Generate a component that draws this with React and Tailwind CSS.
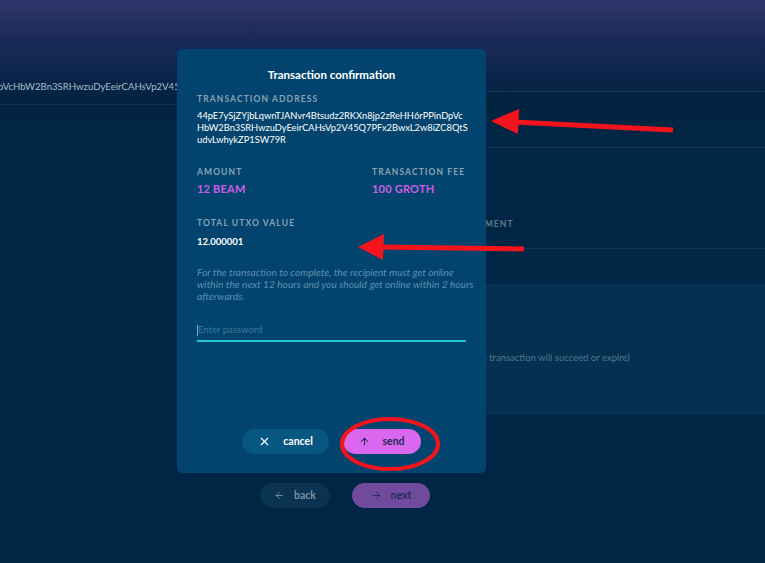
import { X, ArrowUp, ArrowLeft, ArrowRight } from 'lucide-react';

const font = { fontFamily: 'Lato, "Open Sans", sans-serif' };

const addressLines = [
  '44pE7ySjZYjbLqwnTJANvr4Btsudz2RKXn8jp2zReHH6rPPinDpVc',
  'HbW2Bn3SRHwzuDyEeirCAHsVp2V45Q7PFx2BwxL2w8iZC8QtS',
  'udvLwhykZP1SW79R',
];

const noteLines = [
  'For the transaction to complete, the recipient must get online',
  'within the next 12 hours and you should get online within 2 hours',
  'afterwards.',
];

const Label = ({ children, className = '', color = 'text-[#8aa3b6]' }) => (
  <div className={`text-[8.5px] leading-[12px] font-bold tracking-[0.13em] ${color} ${className}`}>
    {children}
  </div>
);

const Background = () => (
  <div className="flex flex-col">
    <div className="grid grid-cols-[340px_1fr]">
      <div className="pt-[80px] overflow-hidden">
        <div className="h-[25px] border-b border-[#0b3658] whitespace-nowrap text-[9.6px] leading-[14px] text-[#a7bccb] -ml-[2px]">
          pVcHbW2Bn3SRHwzuDyEeirCAHsVp2V45Q7PFx2BwxL2w8iZC8QtS
        </div>
      </div>
      <div className="flex flex-col">
        <div className="h-[92px] border-b border-[#0b3658]" />
        <div className="h-[56px] border-b border-[#0b3658]" />
        <div className="h-[101px] border-b border-[#0b3658] pl-[121px] pt-[70px]">
          <Label color="text-[#62798e]">COMMENT</Label>
        </div>
        <div className="h-[35px]" />
        <div className="h-[131px] bg-[#05304f] pl-[133px] pt-[67px]">
          <div className="text-[9.5px] leading-[14px] text-[#56768f]">the transaction will succeed or expire)</div>
        </div>
      </div>
    </div>
    <div className="mt-[68px] ml-[260px] flex gap-[22px]">
      <div className="w-[70px] h-[25px] rounded-full bg-[#0a3352] flex items-center justify-center gap-[9px] text-[#7c8ea3] text-[10.5px] font-bold">
        <ArrowLeft size={11} strokeWidth={2} />
        back
      </div>
      <div className="w-[78px] h-[25px] rounded-full bg-[#704a9d] flex items-center justify-center gap-[9px] text-[#1f2e56] text-[10.5px] font-bold">
        <ArrowRight size={11} strokeWidth={2} />
        next
      </div>
    </div>
  </div>
);

const Modal = () => (
  <div className="absolute left-[177px] top-[49px] w-[309px] h-[424px] rounded-[5px] bg-[#02446d] flex flex-col px-[20px] pt-[19px] pb-[19px]">
    <div className="text-center text-white text-[11.5px] leading-[14px] font-bold">Transaction confirmation</div>
    <Label className="mt-[11px]">TRANSACTION ADDRESS</Label>
    <div className="mt-[5px] text-[9.3px] leading-[12px] text-white whitespace-nowrap">
      {addressLines.map((l) => (
        <div key={l}>{l}</div>
      ))}
    </div>
    <div className="mt-[20px] grid grid-cols-[175px_1fr]">
      <div>
        <Label>AMOUNT</Label>
        <div className="mt-[4px] text-[11px] leading-[14px] font-bold text-[#c95fe3] tracking-[0.02em]">12 BEAM</div>
      </div>
      <div>
        <Label>TRANSACTION FEE</Label>
        <div className="mt-[4px] text-[11px] leading-[14px] font-bold text-[#c95fe3] tracking-[0.02em]">100 GROTH</div>
      </div>
    </div>
    <Label className="mt-[21px]">TOTAL UTXO VALUE</Label>
    <div className="mt-[7px] text-[9.5px] leading-[12px] font-bold text-white">12.000001</div>
    <div className="mt-[18px] text-[10.2px] leading-[12px] italic text-[#5f8fb0] whitespace-nowrap">
      {noteLines.map((l) => (
        <div key={l}>{l}</div>
      ))}
    </div>
    <div className="mt-[19px] h-[21px] border-b-2 border-[#25c6c6] flex items-center">
      <span className="w-px h-[11px] bg-[#7fb3cc]" />
      <span className="text-[9.5px] text-[#3f7898]">Enter password</span>
    </div>
    <div className="mt-auto flex justify-center gap-[14px]">
      <div className="w-[87px] h-[25px] rounded-full bg-[#065782] flex items-center justify-center gap-[12px] text-white text-[10.5px] font-bold">
        <X size={13} strokeWidth={2} />
        cancel
      </div>
      <div className="w-[78px] h-[25px] rounded-full bg-[#d968ee] flex items-center justify-center gap-[12px] text-[#1b2a55] text-[10.5px] font-bold">
        <ArrowUp size={11} strokeWidth={2.2} />
        send
      </div>
    </div>
  </div>
);

const Annotations = () => (
  <svg className="absolute inset-0 pointer-events-none" width="765" height="563" viewBox="0 0 765 563">
    <line x1="514" y1="122" x2="673" y2="130" stroke="#f5141b" strokeWidth="5" />
    <polygon points="491,121 519,109 518,134" fill="#f5141b" />
    <line x1="380" y1="247" x2="524" y2="249" stroke="#f5141b" strokeWidth="5" />
    <polygon points="358,247 384,234 383,260" fill="#f5141b" />
    <ellipse cx="390" cy="444" rx="48" ry="25" fill="none" stroke="#f5141b" strokeWidth="4" />
  </svg>
);

export default function App() {
  return (
    <div
      style={font}
      className="relative w-[765px] h-[563px] overflow-hidden bg-[#012645] bg-[linear-gradient(to_bottom,#2f346a_0px,#1a2a58_40px,#0a2448_80px,#02233f_100px,#012645_140px)]"
    >
      <Background />
      <Modal />
      <Annotations />
    </div>
  );
}
